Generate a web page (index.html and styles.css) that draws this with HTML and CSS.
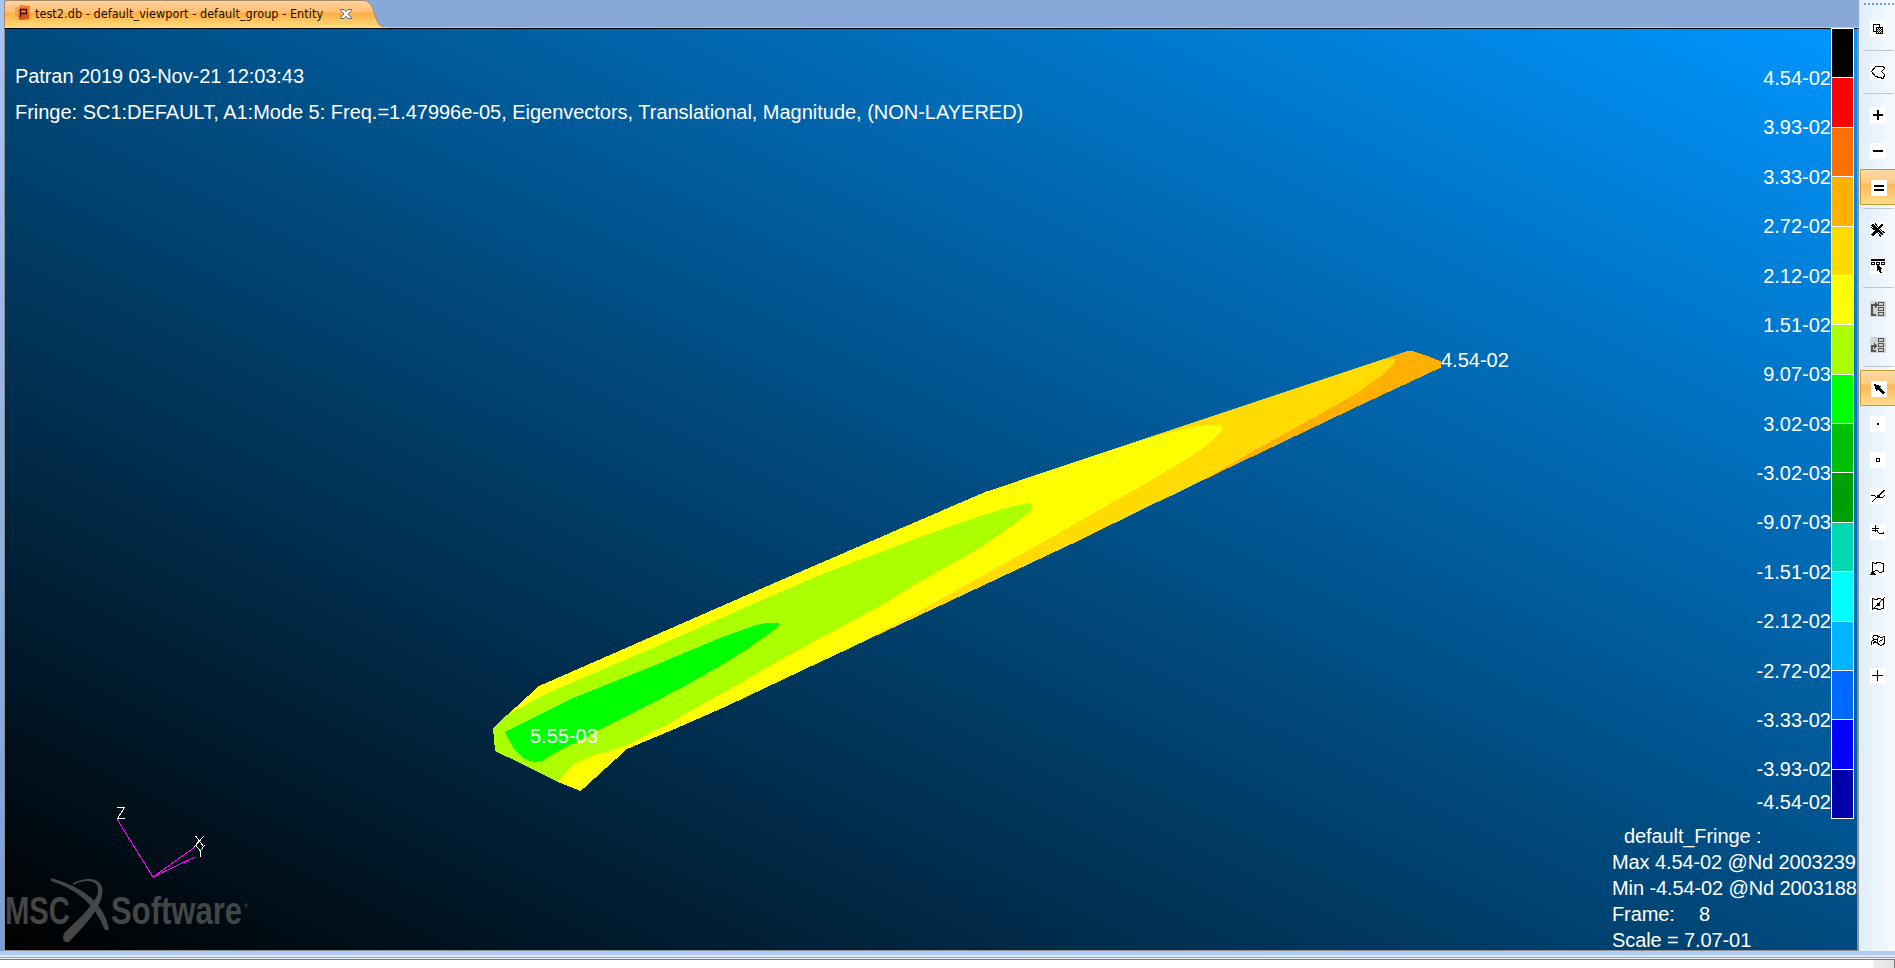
FILE: index.html
```
<!DOCTYPE html>
<html lang="en">
<head>
<meta charset="utf-8">
<title>Patran 2019</title>
<link rel="stylesheet" href="styles.css">
</head>
<body>
<div class="app">
  <div class="workspace">
    <main class="document">
      <header class="tabs">
        <svg class="tab-shape" width="384" height="28" viewBox="0 0 384 28">
          <defs><linearGradient id="tab" x1="0" y1="0" x2="0" y2="1">
            <stop offset="0" stop-color="#ffd3a0"/><stop offset=".42" stop-color="#ffbf72"/>
            <stop offset=".46" stop-color="#ffad42"/><stop offset="1" stop-color="#ffde80"/>
          </linearGradient></defs>
          <path d="M.5 28V3Q.5 .5 3 .5H359C366 .5 368 6 370 12C373 21 374 26.500 380 26.500L384 28Z" fill="url(#tab)"/>
          <path d="M.5 27V3Q.5 .5 3 .5H359C366 .5 368 6 370 12C373 21 374 26.500 380 26.500" fill="none" stroke="#a58a68"/>
        </svg>
        <div class="tab">
          <svg class="tab-icon" width="16" height="16" viewBox="0 0 16 16">
            <path d="M0 2L4 3L5 0L15 1L14 14L4 15L3 12L0 10Z" fill="#f47b20"/>
            <path d="M0 2L4 3L3 12L0 10Z" fill="#fba24c"/><path d="M5 10L14 8V14L4 15Z" fill="#dc5412"/>
            <path d="M5.500 12V4.500H11.500V8.500H5.500" fill="none" stroke="#241005" stroke-width="1.300"/>
          </svg>
          <span class="tab-title">test2.db - default_viewport - default_group - Entity</span>
          <svg class="tab-close" width="12" height="10" viewBox="0 0 12 10">
            <path d="M.5 .5H4L6 2.700L8 .5H11.500V1.500L8 5L11.500 8.500V9.500H8L6 7.300L4 9.500H.5V8.500L4 5L.5 1.500Z" fill="#fff" stroke="#5c6470"/>
          </svg>
        </div>
      </header>
      <section class="viewport">
        <svg class="scene" width="1852" height="921" viewBox="5 29 1852 921">
          <g shape-rendering="crispEdges">
            <path fill="#ffb000" d="M493 728L539 686L780 580.500L985 492L1150 437L1407 351H1412L1425 355L1441 361.500V367.500L1350 410L1150 505.500L1080 540L810 666.700L727 706L677 728L627 749L580.700 791L558 782L520 763L495 751Z"/>
            <path fill="#ffdb00" d="M493 728L539 686L780 580.500L985 492L1150 437L1386 358.500L1395 359V362L1383 375L1357 393L1313 418L1250 453L1203 480L1177 493L1150 505.500L1080 540L810 666.700L727 706L677 728L627 749L580.700 791L558 782L520 763L495 751Z"/>
            <path fill="#ffff00" d="M493 728L539 686L780 580.500L985 492L1110 450.500L1150 438L1190 427L1208 425L1221 425.500L1223 427L1222 430L1210 443L1190 457L1150 481L1113 502L1047 540L980 577L913 615L850 648L810 666.700L727 706L677 728L627 749L580.700 791L558 782L520 763L495 751Z"/>
            <path fill="#acff00" d="M493 728L505 716L550 692L653 648L762 600L825 573L923 536L980 516L1013 506L1030 503L1033 506L1030 512L1013 525L980 548L923 580L880 606L780 660L763 670L670 723L627 745L603 753L597 754L572 765L558 782L520 763L495 751Z"/>
            <path fill="#00ff00" d="M505 732L573 698L653 666L720 638L753 626L768 622.500H780L777 628L750 647L730 660L683 687L603 728L553 754L542 761L533 762L523 758L513 747Z"/>
            <g class="axes"><path d="M117 819L153 877L195 847M153 877L195 857"/></g>
            <g class="axis-names"><path d="M117 807.500H124.500L117.500 818.500H125M195.500 836L204 847M204 836L194 847M195.500 845L200.500 851V857M204.500 845L200.500 851"/></g>
          </g>
          <g class="logo">
            <text x="5" y="924" font-size="38" textLength="65" lengthAdjust="spacingAndGlyphs">MSC</text>
            <text x="111" y="924" font-size="38" textLength="131" lengthAdjust="spacingAndGlyphs">Software</text>
            <text x="244" y="908" font-size="6">®</text>
            <path d="M51 878Q102 892 109 929Q106 932 104 928Q90 893 51 881Z"/>
            <path d="M73 883C91 874 108 880 101 899C96 915 79 931 70 941C66 945 60 939 65 932C77 921 90 909 97 896C102 881 89 877 73 885Z"/>
          </g>
          <g class="readout">
            <text x="530" y="743">5.55-03</text>
            <text x="1441" y="367">4.54-02</text>
          </g>
        </svg>
        <div class="titles">
          <p class="stamp">Patran 2019 03-Nov-21 12:03:43</p>
          <p class="case">Fringe: SC1:DEFAULT, A1:Mode 5: Freq.=1.47996e-05, Eigenvectors, Translational, Magnitude, (NON-LAYERED)</p>
        </div>
        <aside class="side">
          <div class="legend">
            <ol class="values">
              <li>4.54-02</li><li>3.93-02</li><li>3.33-02</li><li>2.72-02</li><li>2.12-02</li><li>1.51-02</li><li>9.07-03</li><li>3.02-03</li><li>-3.02-03</li><li>-9.07-03</li><li>-1.51-02</li><li>-2.12-02</li><li>-2.72-02</li><li>-3.33-02</li><li>-3.93-02</li><li class="last">-4.54-02</li>
            </ol>
            <div class="bar"><i class="c1"></i><i class="c2"></i><i class="c3"></i><i class="c4"></i><i class="c5"></i><i class="c6"></i><i class="c7"></i><i class="c8"></i><i class="c9"></i><i class="c10"></i><i class="c11"></i><i class="c12"></i><i class="c13"></i><i class="c14"></i><i class="c15"></i><i class="c16"></i></div>
          </div>
          <div class="summary">
            <p class="name">default_Fringe :</p>
            <p>Max 4.54-02 @Nd 2003239</p>
            <p>Min -4.54-02 @Nd 2003188</p>
            <p class="frame"><span>Frame:</span><span>8</span></p>
            <p>Scale = 7.07-01</p>
          </div>
        </aside>
      </section>
    </main>
    <nav class="toolbar">
      <div class="grip"></div>
      <div class="tool"><svg viewBox="0 0 16 16"><path d="M3.500 3.500H9.500V10.500H3.500Z"/><path d="M6.500 6.500H12.500V12.500H6.500Z" fill="#fff"/><path class="f" d="M8 7h1v1h-1zM10 7h1v1h-1zM7 8h1v1h-1zM9 8h1v1h-1zM11 8h1v1h-1zM8 9h1v1h-1zM10 9h1v1h-1zM7 10h1v1h-1zM9 10h1v1h-1zM11 10h1v1h-1zM8 11h1v1h-1zM10 11h1v1h-1z"/></svg></div>
      <hr>
      <div class="tool"><svg viewBox="0 0 16 16"><path d="M5.500 2.500H13.500L14.500 4.500L11.500 7.500L14.500 10.500L13.500 14.500L5.500 12.500L1.500 7.500Z"/></svg></div>
      <hr>
      <div class="tool"><svg viewBox="0 0 16 16"><path class="f" d="M3 7h4V3h2v4h4v2H9v4H7V9H3z"/></svg></div>
      <div class="tool"><svg viewBox="0 0 16 16"><path class="f" d="M3 7h10v2H3z"/></svg></div>
      <div class="tool on"><svg viewBox="0 0 16 16"><path class="f" d="M3 5h10v2H3zM3 9h10v2H3z"/></svg></div>
      <hr>
      <div class="tool"><svg viewBox="0 0 16 16"><path d="M2 2.500L13 13M12.500 2.500L2 13.500" stroke-width="2.500"/><path d="M5 1.500L9 6M1.500 5.500L6 9M7 10L11 14.500M10 7L14.500 11"/></svg></div>
      <div class="tool"><svg viewBox="0 0 16 16"><path class="f" d="M1 1h14v2H1zM7 6L13 11L10.500 11.500L12 15H10L8.500 12L7 13.500z"/><path d="M1.500 4.500h3v2h-3zM6.500 4.500h3v2h-3zM11.500 4.500h3v2h-3z"/></svg></div>
      <hr>
      <div class="tool off"><svg viewBox="0 0 16 16"><path class="f" d="M1 3h4V1l3 3-3 3V5H3v8h3v2H1z"/><path d="M8.500 1.500h5v3h-5zM8.500 6.500h5v3h-5zM8.500 11.500h5v3h-5z"/></svg></div>
      <div class="tool off"><svg viewBox="0 0 16 16"><path class="f" d="M1 8h3V6l3 3-3 3v-2H3v3h3v2H1z"/><path d="M8.500 1.500h5v3h-5zM8.500 6.500h5v3h-5zM8.500 11.500h5v3h-5z"/></svg></div>
      <hr>
      <div class="tool on"><svg viewBox="0 0 16 16"><path class="f" d="M3 3L10 5L8.500 6.500L13.500 11.500L11.500 13.500L6.500 8.500L5 10z"/></svg></div>
      <div class="tool"><svg viewBox="0 0 16 16"><path class="f" d="M7 7h2v2H7z"/></svg></div>
      <div class="tool"><svg viewBox="0 0 16 16"><path d="M6.500 6.500h3v3h-3z"/></svg></div>
      <div class="tool"><svg viewBox="0 0 16 16"><path d="M2 14L14.500 2M1 7.500H4L7 9.500H12L15 7.500"/><path class="f" d="M7 7h3v3H7z"/></svg></div>
      <div class="tool"><svg viewBox="0 0 16 16"><path d="M5.500 1V8M1.500 4.500H9M2 6.500H7L9.500 9.500H12.500L14.500 8.500"/></svg></div>
      <div class="tool"><svg viewBox="0 0 16 16"><path d="M2.500 13V2.500L5 3.500L8 2.500L13.500 3.500V11.500L10 12.500L7 10.500L3 11.500"/><path class="f" d="M3 10L6 15H0z"/></svg></div>
      <div class="tool"><svg viewBox="0 0 16 16"><path d="M2.500 12.500V2.500L6 3.500L9 2.500L13.500 3.500V12.500L9 13.500L6 12.500ZM2 14L15 1"/><path class="f" d="M7 7h3v3H7z"/></svg></div>
      <div class="tool"><svg viewBox="0 0 16 16"><path d="M1.500 12.500V9.500L4 7.500L2.500 5.500L4 3.500H7.500L8.500 5.500L7 7.500H4M7 7.500L8.500 12.500M3 11.500L5 9.500L8.500 12.500L11 13.500L14.500 11.500V4.500L12 5.500L8.500 4.500M9 9.500L11 8.500L13.500 7.500"/></svg></div>
      <div class="tool"><svg viewBox="0 0 16 16"><path d="M7.500 2V13M2 7.500H13"/></svg></div>
    </nav>
  </div>
  <footer class="lower"><div class="splitter"></div><div class="output"><div class="scroll"></div></div></footer>
</div>
</body>
</html>
```

FILE: styles.css
```
* { box-sizing: border-box; }
body { margin: 0; font-family: "Liberation Sans", Arial, sans-serif; }
p, ol { margin: 0; padding: 0; }

.app { width: 1895px; height: 968px; overflow: hidden; display: flex; flex-direction: column; background: #fff; }
.workspace { flex: none; height: 951px; display: flex; }

.document {
  flex: none; width: 1859px; padding-left: 4px; display: flex; flex-direction: column;
  background: linear-gradient(#a9c6f3, #7a9fd8);
}
.tabs { flex: none; height: 28px; position: relative; background: #88a8d7; border-bottom: 1px solid #f5be7e; }
.tab-shape { position: absolute; left: 0; top: 0; }
.tab { position: relative; height: 27px; display: flex; align-items: center; padding-left: 11px; }
.tab-icon { margin: -2px 4px 0 0; }
.tab-title { width: 292px; font: 12.5px/27px "DejaVu Sans Condensed", "DejaVu Sans", sans-serif; font-stretch: condensed; letter-spacing: .06px; white-space: nowrap; color: #1a1208; }
.tab-close { margin-left: 13px; }

.viewport {
  position: relative; flex: 1; min-height: 0; display: flex; justify-content: space-between;
  border: 1px solid #8f8f94; border-right-width: 2px; border-top-color: #000;
  background: linear-gradient(to top right, #000, #0096ff);
  color: #fff; font-size: 20px;
}
.scene { position: absolute; left: 0; top: 0; }
.axes { stroke: #f0f; fill: none; }
.axis-names { stroke: #fff; fill: none; }
.logo { fill: #444647; font-weight: bold; }
.readout { fill: #fff; }

.titles { position: relative; padding: 34px 0 0 10px; white-space: nowrap; }
.titles p { height: 36px; line-height: 26px; }
.stamp { letter-spacing: -.08px; }
.case { letter-spacing: -.02px; }

.side { position: relative; width: 245px; white-space: nowrap; }
.legend { height: 790px; margin-top: -1px; display: flex; justify-content: flex-end; padding-right: 3px; }
.values { list-style: none; padding-top: 26px; text-align: right; }
.values li { height: 49.375px; line-height: 49.375px; }
.values .last { margin-top: -17px; }
.bar { width: 23px; height: 791px; display: flex; flex-direction: column; border: 1px solid #fff; border-bottom: 0; }
.bar i { flex: 1; border-bottom: 1px solid #fff; }
.c1 { background: #000; } .c2 { background: #f00; } .c3 { background: #ff7000; } .c4 { background: #ffb000; }
.c5 { background: #ffdb00; } .c6 { background: #ff0; } .c7 { background: #acff00; } .c8 { background: #0f0; }
.c9 { background: #00c000; } .c10 { background: #00a000; } .c11 { background: #00d8b0; } .c12 { background: #0ff; }
.c13 { background: #00b4ff; } .c14 { background: #0068ff; } .c15 { background: #00f; } .c16 { background: #0000a8; }
.summary { padding-top: 5px; letter-spacing: -.1px; }
.summary p { height: 26px; line-height: 26px; }
.summary .name { padding-left: 12px; }
.frame { display: flex; }
.frame span:first-child { width: 87px; }

.toolbar { flex: 1; min-width: 0; background: linear-gradient(90deg, #dfeef8, #f6faff); }
.grip { height: 2px; margin: 3px 0 6px 5px; background: repeating-linear-gradient(90deg, #6f9ee0 0 2px, transparent 2px 4px); }
.toolbar hr { height: 1px; margin: 3px 1px 3px 4px; border: 0; background: #bcc6d6; }
.tool { height: 36px; padding: 10px 0 0 11px; }
.tool svg { display: block; width: 16px; height: 16px; background: #fff; fill: none; stroke: #000; shape-rendering: crispEdges; }
.tool .f { fill: #000; stroke: none; }
.tool.on { margin-left: 1px; padding: 10px 0 0 10px; border: 1px solid #c29b33; border-right: 0; border-radius: 2px 0 0 2px; background: linear-gradient(#fcd9a3, #fdcb83 38%, #fdb956 42%, #fedb8c); }
.tool.off svg { background: #d2d2d2; stroke: #555; }
.tool.off .f { fill: #555; }

.lower { flex: 1; display: flex; flex-direction: column; }
.splitter { height: 9px; background: linear-gradient(#b0cdf5 0 4px, #dfe9f5 4px 6px, #85a9dd 6px 7px, #eef3fa 7px 8px, #77777b 8px); }
.output { flex: 1; display: flex; justify-content: flex-end; background: #fff; }
.scroll { width: 22px; background: linear-gradient(90deg, #eee, #e2e2e2); border-right: 1px solid #777; }
```
